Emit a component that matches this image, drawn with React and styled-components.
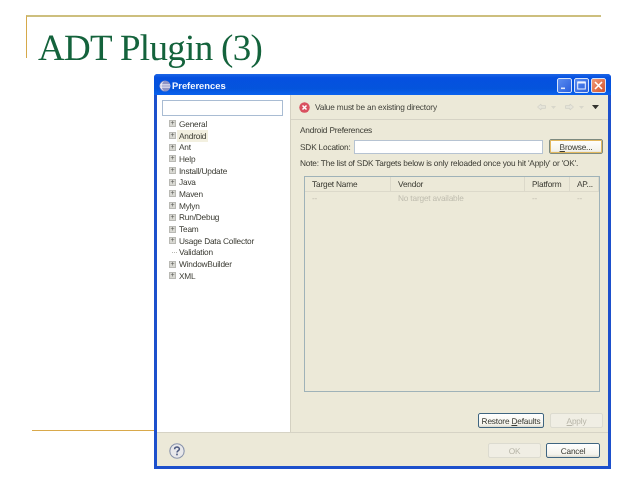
import React from 'react'
import styled, { createGlobalStyle } from 'styled-components'

const GlobalStyle = createGlobalStyle`
  html, body {
    margin: 0;
    padding: 0;
    background: #fff;
  }
  body {
    width: 638px;
    height: 479px;
    overflow: hidden;
    font-family: "Liberation Sans", sans-serif;
    text-rendering: geometricPrecision;
  }
`

const Slide = styled.main`
  width: 638px;
  height: 479px;
  padding-top: 15px;
  box-sizing: border-box;
`

const TitleFrame = styled.header`
  box-sizing: border-box;
  width: 575px;
  height: 43px;
  margin-left: 26px;
  padding-left: 11px;
  border-top: 2px solid #cdbf7e;
  border-left: 1px solid #d6a94a;
`

const Title = styled.h1`
  margin: 0;
  padding-top: 10px;
  font: 400 37px/44px "Liberation Serif", serif;
  letter-spacing: -0.68px;
  color: #14633c;
  filter: blur(0.35px);
`

const Stage = styled.div`
  display: flex;
  align-items: flex-start;
  margin-top: 16px;
`

const FooterRule = styled.div`
  flex: none;
  width: 122px;
  height: 1px;
  margin: 356px 0 0 32px;
  border-top: 1px solid #d9a94b;
`

const Window = styled.section`
  flex: none;
  display: flex;
  flex-direction: column;
  box-sizing: border-box;
  width: 457px;
  height: 395px;
  padding: 0 3px 3px;
  border-radius: 4px 4px 0 0;
  background: #1d50cc;
  color: #3b3b33;
  font-size: 8.3px;
  letter-spacing: -0.19px;
  line-height: 12px;
  filter: blur(0.3px);
`

const TitleBar = styled.div`
  flex: none;
  display: flex;
  align-items: center;
  box-sizing: border-box;
  height: 21px;
  margin: 0 -3px;
  padding: 2px 5px 0 5px;
  border-radius: 4px 4px 0 0;
  background: linear-gradient(#1d66e6 0%, #0550e0 18%, #0454dc 70%, #0a62ee 100%);
`

const WindowName = styled.span`
  flex: 1;
  margin-left: 1px;
  color: #f2f6ff;
  font: 700 9.4px/12px "Liberation Sans", sans-serif;
  letter-spacing: 0;
`

const CaptionButton = styled.span`
  display: flex;
  align-items: center;
  justify-content: center;
  box-sizing: border-box;
  width: 15px;
  height: 15px;
  margin-left: 2px;
  border: 1px solid #d8e4fa;
  border-radius: 2px;
  background: ${props => props.$close
    ? 'linear-gradient(135deg, #ef9a78, #d5542c)'
    : 'linear-gradient(135deg, #5a8cf0, #2a5fdc)'};
`

const Body = styled.div`
  flex: 1;
  display: flex;
  min-height: 0;
`

const TreePanel = styled.nav`
  flex: none;
  box-sizing: border-box;
  width: 133px;
  padding: 5px 7px 0 5px;
  background: #fff;
`

const FilterInput = styled.div`
  box-sizing: border-box;
  height: 16px;
  border: 1px solid #a9bcd3;
  background: #fff;
`

const Tree = styled.ul`
  margin: 2px 0 0;
  padding: 0 0 0 7px;
  list-style: none;
`

const TreeRow = styled.li`
  display: flex;
  align-items: center;
  height: 11.7px;
`

const Expander = styled.span`
  display: flex;
  align-items: center;
  justify-content: center;
  flex: none;
  box-sizing: border-box;
  width: 7px;
  height: 7px;
  margin-right: 1px;
  border: 1px solid #b9b9b4;
  background: #d9d9d3;
  color: #55554f;
  font-size: 7px;
  line-height: 5px;
`

const Stub = styled.span`
  flex: none;
  width: 5px;
  margin: 0 0 0 3px;
  border-top: 1px dotted #b8b8b2;
`

const TreeLabel = styled.span`
  padding: 0 2px;
  background: ${props => props.$selected ? '#f3f0e0' : 'transparent'};
  white-space: nowrap;
`

const MainPanel = styled.div`
  flex: 1;
  display: flex;
  flex-direction: column;
  min-width: 0;
  border-left: 1px solid #d4d1c2;
  background: #ece9d8;
`

const MessageBar = styled.div`
  flex: none;
  display: flex;
  align-items: center;
  box-sizing: border-box;
  height: 25px;
  padding: 0 9px 0 8px;
  border-bottom: 1px solid #d6d3c5;
`

const Message = styled.span`
  flex: 1;
  margin-left: 5px;
  color: #45453e;
`

const History = styled.div`
  display: flex;
  align-items: center;
  gap: 4px;
`

const Content = styled.div`
  flex: 1;
  display: flex;
  flex-direction: column;
  padding: 4px 4px 3px 9px;
  min-height: 0;
`

const SectionTitle = styled.div`
  height: 12px;
`

const SdkRow = styled.div`
  display: flex;
  align-items: center;
  gap: 6px;
  margin-top: 3px;
  height: 15px;
`

const SdkLabel = styled.span`
  flex: none;
  width: 48px;
  white-space: nowrap;
`

const SdkInput = styled.div`
  box-sizing: border-box;
  flex: none;
  width: 189px;
  height: 14px;
  border: 1px solid #b6c3d2;
  background: #fff;
`

const Button = styled.span`
  display: flex;
  align-items: center;
  justify-content: center;
  flex: none;
  box-sizing: border-box;
  width: ${props => props.$width}px;
  height: 15px;
  border: 1px solid ${props => {
    if (props.$disabled) return '#dcdbd0'
    return props.$focused ? '#7d8a80' : '#3f6580'
  }};
  border-radius: 2px;
  box-shadow: ${props => props.$focused ? 'inset 0 0 0 1px #e2b85e' : 'none'};
  background: ${props => props.$disabled ? '#f0eee4' : 'linear-gradient(#fff, #f4f3ec 80%, #dddbd0)'};
  color: ${props => props.$disabled ? '#b7b5a8' : '#3b3b33'};
  white-space: nowrap;
`

const Mnemonic = styled.span`
  text-decoration: underline;
`

const Note = styled.div`
  margin-top: 3px;
  height: 12px;
  white-space: nowrap;
`

const Table = styled.div`
  flex: none;
  box-sizing: border-box;
  width: 296px;
  height: 216px;
  margin: 7px 0 0 4px;
  border: 1px solid #9fb2b8;
`

const TableRow = styled.div`
  display: grid;
  grid-template-columns: 86px 134px 45px 1fr;
  height: ${props => props.$header ? 14 : 11}px;
  align-items: center;
  border-bottom: ${props => props.$header ? '1px solid #dcd9ca' : 'none'};
  color: ${props => props.$header ? '#3b3b33' : '#c0beb0'};
`

const Cell = styled.span`
  height: 100%;
  display: flex;
  align-items: center;
  padding-left: 7px;
  border-right: ${props => props.$header ? '1px solid #dcd9ca' : 'none'};
  white-space: nowrap;
`

const ApplyRow = styled.div`
  display: flex;
  justify-content: flex-end;
  gap: 6px;
  margin-top: auto;
  margin-bottom: 1px;
  padding-right: 1px;
`

const Footer = styled.footer`
  flex: none;
  display: flex;
  align-items: center;
  box-sizing: border-box;
  height: 34px;
  padding: 2px 8px 0 12px;
  border-top: 1px solid #d6d3c5;
  background: #ece9d8;
`

const FooterButtons = styled.div`
  display: flex;
  gap: 5px;
  margin-left: auto;
`

const CaretMark = styled.svg`
  flex: none;
  margin-right: ${props => props.$after ?? 0}px;
`

const EclipseIcon = () => (
  <svg width="12" height="12" viewBox="0 0 12 12">
    <circle cx="6" cy="6" r="5.5" fill="#8f93c4" />
    <path d="M1 4.6h10M.6 6h10.8M1 7.4h10" stroke="#f2f2fa" strokeWidth=".7" />
    <path d="M5 1.2A5 5 0 0 0 5 10.8A6 6 0 0 1 5 1.2" fill="#e9e9f5" />
  </svg>
)

const ErrorIcon = () => (
  <svg width="11" height="11" viewBox="0 0 11 11">
    <circle cx="5.5" cy="5.5" r="5.2" fill="#d9505f" />
    <path d="M3.5 3.5l4 4M7.5 3.5l-4 4" stroke="#fff" strokeWidth="1.5" />
  </svg>
)

const HelpIcon = () => (
  <svg width="16" height="16" viewBox="0 0 16 16">
    <circle cx="8" cy="8" r="7.2" fill="#e8e8ea" stroke="#8a94ac" strokeWidth="1.1" />
    <path d="M5.6 6.2C5.8 3.4 10.4 3.5 10.4 6C10.4 7.6 8 7.8 8 9.6" fill="none" stroke="#4d5a80" strokeWidth="1.5" />
    <rect x="7.2" y="10.6" width="1.6" height="1.7" fill="#4d5a80" />
  </svg>
)

const ArrowIcon = ({ flip }) => (
  <svg width="11" height="8" viewBox="0 0 10 8" style={flip ? { transform: 'scaleX(-1)' } : undefined}>
    <path d="M1 4L4.5 1V2.6H9V5.4H4.5V7Z" fill="#e6e5da" stroke="#cfcfc4" strokeWidth=".7" />
  </svg>
)

const Caret = ({ color, size = 5, after }) => (
  <CaretMark $after={after} width={size} height={size * 0.6} viewBox="0 0 5 3">
    <path d="M0 0H5L2.5 3Z" fill={color} />
  </CaretMark>
)

const treeItems = [
  { label: 'General' },
  { label: 'Android', selected: true },
  { label: 'Ant' },
  { label: 'Help' },
  { label: 'Install/Update' },
  { label: 'Java' },
  { label: 'Maven' },
  { label: 'Mylyn' },
  { label: 'Run/Debug' },
  { label: 'Team' },
  { label: 'Usage Data Collector' },
  { label: 'Validation', leaf: true },
  { label: 'WindowBuilder' },
  { label: 'XML' },
]

const columns = ['Target Name', 'Vendor', 'Platform', 'AP...']

const App = () => (
  <>
    <GlobalStyle />
    <Slide>
      <TitleFrame>
        <Title>ADT Plugin (3)</Title>
      </TitleFrame>
      <Stage>
        <FooterRule />
        <Window>
          <TitleBar>
            <EclipseIcon />
            <WindowName>Preferences</WindowName>
            <CaptionButton>
              <svg width="9" height="9" viewBox="0 0 9 9"><rect x="1" y="6.5" width="4" height="1.6" fill="#dfe8fb" /></svg>
            </CaptionButton>
            <CaptionButton>
              <svg width="9" height="9" viewBox="0 0 9 9"><rect x=".7" y="1" width="7.6" height="7" fill="none" stroke="#eef3ff" strokeWidth="1" /><rect x=".7" y=".7" width="7.6" height="1.8" fill="#eef3ff" /></svg>
            </CaptionButton>
            <CaptionButton $close>
              <svg width="9" height="9" viewBox="0 0 9 9"><path d="M1 1l7 7M8 1L1 8" stroke="#fff" strokeWidth="1.6" /></svg>
            </CaptionButton>
          </TitleBar>
          <Body>
            <TreePanel>
              <FilterInput />
              <Tree>
                {treeItems.map(item => (
                  <TreeRow key={item.label}>
                    {item.leaf ? <Stub /> : <Expander>+</Expander>}
                    <TreeLabel $selected={item.selected}>{item.label}</TreeLabel>
                  </TreeRow>
                ))}
              </Tree>
            </TreePanel>
            <MainPanel>
              <MessageBar>
                <ErrorIcon />
                <Message>Value must be an existing directory</Message>
                <History>
                  <ArrowIcon />
                  <Caret color="#d8d7cb" after={4} />
                  <ArrowIcon flip />
                  <Caret color="#d8d7cb" after={4} />
                  <Caret color="#33332e" size={7} />
                </History>
              </MessageBar>
              <Content>
                <SectionTitle>Android Preferences</SectionTitle>
                <SdkRow>
                  <SdkLabel>SDK Location:</SdkLabel>
                  <SdkInput />
                  <Button $width={54} $focused><span><Mnemonic>B</Mnemonic>rowse...</span></Button>
                </SdkRow>
                <Note>Note: The list of SDK Targets below is only reloaded once you hit 'Apply' or 'OK'.</Note>
                <Table>
                  <TableRow $header>
                    {columns.map(name => <Cell key={name} $header>{name}</Cell>)}
                  </TableRow>
                  <TableRow>
                    <Cell>--</Cell>
                    <Cell>No target available</Cell>
                    <Cell>--</Cell>
                    <Cell>--</Cell>
                  </TableRow>
                </Table>
                <ApplyRow>
                  <Button $width={66}><span>Restore <Mnemonic>D</Mnemonic>efaults</span></Button>
                  <Button $width={53} $disabled><span><Mnemonic>A</Mnemonic>pply</span></Button>
                </ApplyRow>
              </Content>
            </MainPanel>
          </Body>
          <Footer>
            <HelpIcon />
            <FooterButtons>
              <Button $width={53} $disabled>OK</Button>
              <Button $width={54}>Cancel</Button>
            </FooterButtons>
          </Footer>
        </Window>
      </Stage>
    </Slide>
  </>
)

export default App
